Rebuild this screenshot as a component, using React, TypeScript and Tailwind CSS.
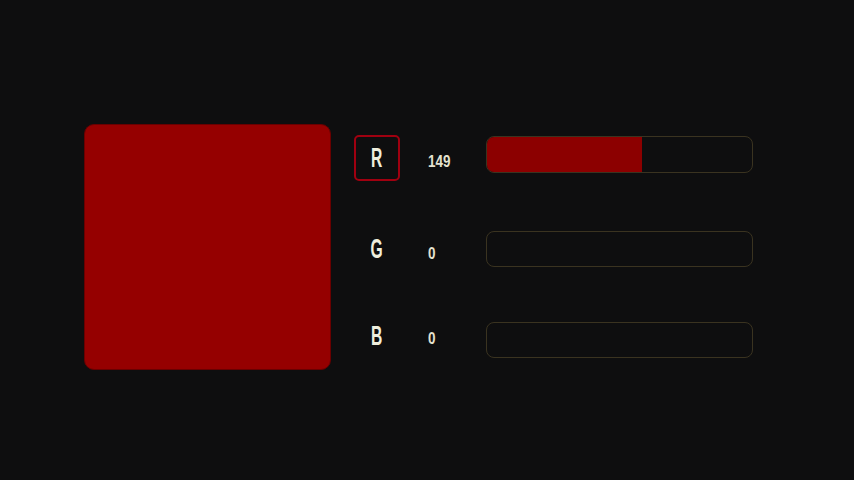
import React from 'react';

type Channel = { key: string; value: number; selected?: boolean };

const channels: Channel[] = [
  { key: 'R', value: 149, selected: true },
  { key: 'G', value: 0 },
  { key: 'B', value: 0 },
];

// per-row vertical tuning taken from the reference
const rowStyles = [
  { row: 'mt-[135px]', value: 'mt-[15px]', bar: 'mt-[1px] h-[37px]' },
  { row: 'mt-[45px]', value: 'mt-[16px]', bar: 'mt-[5px] h-[36px]' },
  { row: 'mt-[41px]', value: 'mt-[14px]', bar: 'mt-[9px] h-[36px]' },
];

const font = { fontFamily: '"Liberation Sans", Arial, sans-serif' };

export default function App() {
  const [r, g, b] = channels.map(c => c.value);

  return (
    <div className="w-full h-[480px] bg-[#0e0e0f] flex overflow-hidden" style={font}>
      {/* Colour preview */}
      <div className="ml-[84px] mt-[124px] w-[247px] h-[246px] rounded-[10px] border border-[#6a0000]" style={{ backgroundColor: `rgb(${r}, ${g}, ${b})` }} />

      {/* Channel sliders */}
      <div className="ml-[23px] flex flex-col">
        {channels.map((c, i) => {
          const s = rowStyles[i];
          return (
            <div key={c.key} className={`flex items-start h-[46px] ${s.row}`}>
              <div
                className={`w-[46px] h-[46px] rounded-[5px] border-2 flex items-center justify-center ${
                  c.selected ? 'border-[#a00010]' : 'border-transparent'
                }`}
              >
                <span className="inline-block text-[27px] leading-none font-bold text-[#efeedd] scale-x-[0.58]">
                  {c.key}
                </span>
              </div>
              <div className={`ml-[28px] w-[58px] ${s.value}`}>
                <span className="inline-block origin-left text-[16px] leading-[16px] font-bold text-[#e4e2d0] scale-x-[0.84]">
                  {c.value}
                </span>
              </div>
              <div className={`w-[267px] rounded-[8px] border border-[#3a3320] overflow-hidden ${s.bar}`}>
                <div className="h-full bg-[#8c0000]" style={{ width: `${(c.value / 255) * 100}%` }} />
              </div>
            </div>
          );
        })}
      </div>
    </div>
  );
}
